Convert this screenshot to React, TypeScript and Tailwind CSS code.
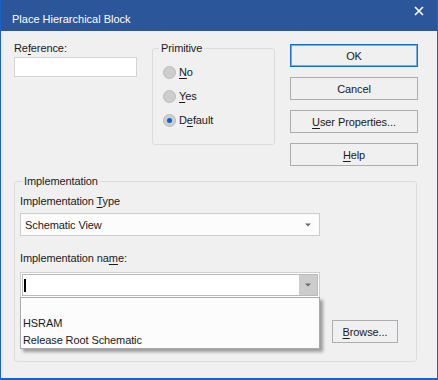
import React from "react";

const Btn: React.FC<{ children: React.ReactNode; primary?: boolean; w?: string }> = ({
  children,
  primary,
  w = "w-full",
}) => (
  <div
    className={`${w} h-[23px] flex items-center justify-center bg-[#f0f0f0] border ${
      primary ? "border-[#1e6bc6] shadow-[inset_0_0_0_1px_#7aaae0]" : "border-[#adadad]"
    }`}
  >
    {children}
  </div>
);

const Radio: React.FC<{ pre?: string; u: string; post?: string; checked?: boolean }> = ({
  pre,
  u,
  post,
  checked,
}) => (
  <div className="h-[24px] flex items-center gap-[3px]">
    <div className="w-[13px] h-[13px] rounded-full bg-[#cdcdcd] border border-[#bcbcbc] flex items-center justify-center">
      {checked && <div className="w-[5px] h-[5px] rounded-full bg-[#0a63c9]" />}
    </div>
    <span>
      {pre}
      <span className="underline underline-offset-2">{u}</span>
      {post}
    </span>
  </div>
);

const Arrow = () => (
  <svg width="6" height="4" viewBox="0 0 6 4">
    <path d="M0 0.5h6L3 3.5z" fill="#6b6b6b" />
  </svg>
);

export default function App() {
  return (
    <div className="w-[438px] h-[380px] flex flex-col bg-[#f0f0f0] border-x border-b-2 border-[#1c62c7] text-[11px] tracking-[-0.1px] text-[#1a1a1a] font-['Liberation_Sans',Arial,sans-serif] leading-[14px]">
      {/* title bar */}
      <div className="h-[31px] shrink-0 bg-[#2b579a] flex items-start justify-between pl-[11px] pr-[13px] text-white">
        <span className="mt-[12px] tracking-normal">Place Hierarchical Block</span>
        <svg className="mt-[6px]" width="10" height="10" viewBox="0 0 10 10">
          <path d="M1 1L9 9M9 1L1 9" stroke="#fff" strokeWidth="1.6" />
        </svg>
      </div>

      <div className="flex-1 flex flex-col pt-[10px] pl-[13px]">
        <div className="flex items-start">
          {/* Reference */}
          <div className="w-[123px] flex flex-col">
            <span className="h-[14px]">
              Re<span className="underline underline-offset-2">f</span>erence:
            </span>
            <div className="mt-[2px] h-[20px] bg-white border border-[#d4d4d4]" />
          </div>

          {/* Primitive */}
          <fieldset className="ml-[15px] w-[123px] h-[104px] border border-[#dcdcdc] rounded-[3px]">
            <legend className="ml-[6px] px-[2px]">Primitive</legend>
            <div className="pt-[5px] pl-[10px]">
              <Radio u="N" post="o" />
              <Radio u="Y" post="es" />
              <Radio pre="D" u="e" post="fault" checked />
            </div>
          </fieldset>

          {/* buttons */}
          <div className="ml-[15px] mt-[3px] w-[128px] flex flex-col gap-[10px]">
            <Btn primary>OK</Btn>
            <Btn>Cancel</Btn>
            <Btn>
              <span className="underline underline-offset-2">U</span>ser Properties...
            </Btn>
            <Btn>
              <span className="underline underline-offset-2">H</span>elp
            </Btn>
          </div>
        </div>

        {/* Implementation */}
        <fieldset className="mt-[8px] w-[403px] h-[188px] border border-[#dcdcdc] rounded-[3px]">
          <legend className="ml-[8px] px-[1px]">Implementation</legend>
          <div className="pt-[6px] pl-[5px] flex flex-col">
            <span className="h-[14px]">
              Implementation <span className="underline underline-offset-2">T</span>ype
            </span>
            <div className="mt-[5px] w-[300px] h-[23px] bg-[#fcfcfc] border border-[#cccccc] flex items-center justify-between pl-[4px] pr-[8px]">
              <span>Schematic View</span>
              <Arrow />
            </div>

            <span className="mt-[15px] h-[14px]">
              Implementation na<span className="underline underline-offset-2">m</span>e:
            </span>
            <div className="relative mt-[7px] w-[300px] h-[26px] bg-white border border-[#cfcfcf] p-[1px]">
              <div className="h-full flex border border-[#bababa]">
                <div className="flex-1 flex items-center pl-[1px]">
                  <div className="w-[2px] h-[13px] bg-black" />
                </div>
                <div className="w-[18px] h-full bg-[#cccccc] flex items-center justify-center">
                  <Arrow />
                </div>
              </div>
              <div className="absolute left-[-1px] top-[24px] w-[300px] h-[52px] bg-[#fcfcfc] border border-[#aaaaaa] shadow-[3px_3px_3px_rgba(0,0,0,0.35)] z-10">
                <div className="h-[17px]" />
                <div className="h-[17px] leading-[17px] pl-[2px]">HSRAM</div>
                <div className="h-[17px] leading-[17px] pl-[2px]">Release Root Schematic</div>
              </div>
            </div>

            <div className="mt-[22px] flex justify-end pr-[18px]">
              <Btn w="w-[66px]">
                <span className="underline underline-offset-2">B</span>rowse...
              </Btn>
            </div>
          </div>
        </fieldset>
      </div>
    </div>
  );
}
